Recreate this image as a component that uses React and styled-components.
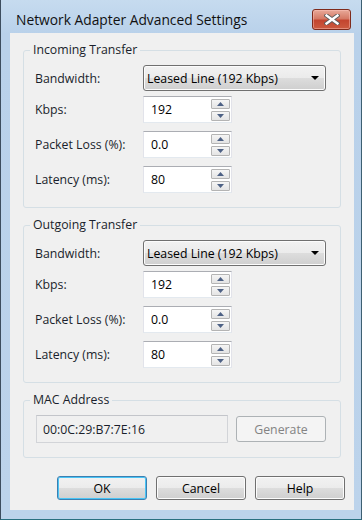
import React from 'react';
import styled, { createGlobalStyle } from 'styled-components';

const GlobalStyle = createGlobalStyle`
  html, body {
    margin: 0;
    padding: 0;
  }
  body {
    font-family: "Open Sans", "Liberation Sans", sans-serif;
    background: #bcd3ea;
  }
`;

const Frame = styled.div`
  width: 362px;
  height: 520px;
  box-sizing: border-box;
  display: flex;
  flex-direction: column;
  padding: 0 7px 9px 9px;
  border-left: 1px solid #3d4d5e;
  border-right: 1px solid #3d5f72;
  border-bottom: 1px solid #2a7080;
  background: linear-gradient(#c6dbef, #b9d1ea 34px, #bcd3eb);
`;

const TitleBar = styled.div`
  height: 33px;
  box-sizing: border-box;
  padding: 6px 3px 0 6px;
  display: flex;
  align-items: center;
  justify-content: space-between;
`;

const Title = styled.div`
  font-size: 13.8px;
  color: #111;
  white-space: nowrap;
`;

const CloseButton = styled.div`
  width: 39px;
  height: 21px;
  box-sizing: border-box;
  border: 1px solid #7f2b1c;
  border-radius: 3px;
  display: flex;
  align-items: center;
  justify-content: center;
  background: linear-gradient(#e8a999, #d57a66 45%, #c3452f 55%, #cc5b40);
  box-shadow: inset 0 0 0 1px rgba(255, 200, 190, 0.45);
`;

const Client = styled.div`
  flex: 1;
  background: #f0f0f0;
  display: flex;
  flex-direction: column;
  gap: 9px;
  padding: 9px 13px 0;
`;

const Group = styled.fieldset`
  margin: 0;
  padding: 0 0 14px;
  min-width: 0;
  border: 1px solid #d5dfe5;
  border-radius: 3px;
`;

const Legend = styled.legend`
  margin-left: 6px;
  padding: 0 3px;
  font-size: 12.3px;
  line-height: 16px;
  color: #1a1f2c;
`;

const Rows = styled.div`
  display: flex;
  flex-direction: column;
  gap: 8px;
  padding: 7px 0 0 11px;
`;

const Row = styled.div`
  display: flex;
  align-items: center;
  margin-bottom: ${p => (p.$tight ? -3 : 0)}px;
`;

const Label = styled.div`
  width: 108px;
  font-size: 12.3px;
  color: #1a1f2c;
`;

const Select = styled.div`
  width: 183px;
  height: 26px;
  box-sizing: border-box;
  border: 1px solid #707070;
  border-radius: 3px;
  padding: 0 6px 0 3px;
  display: flex;
  align-items: center;
  justify-content: space-between;
  font-size: 12.3px;
  color: #000;
  background: linear-gradient(#f2f2f2, #ebebeb 50%, #dddddd 50%, #cfcfcf);
  box-shadow: inset 0 0 0 1px #fcfcfc;
`;

const SpinBox = styled.div`
  width: 89px;
  height: 27px;
  box-sizing: border-box;
  background: #fff;
  border: 1px solid #e2e3ea;
  border-top-color: #abadb3;
  border-bottom-color: #e3e9ef;
  display: flex;
  align-items: center;
`;

const SpinValue = styled.div`
  flex: 1;
  padding-left: 7px;
  font-size: 12.3px;
  color: #000;
`;

const SpinButtons = styled.div`
  align-self: stretch;
  display: flex;
  flex-direction: column;
  gap: 2px;
  padding: 2px 1px 1px 0;
`;

const SpinButton = styled.div`
  width: 19px;
  height: 10px;
  box-sizing: border-box;
  border: 1px solid #b4b4b4;
  border-radius: 1px;
  display: flex;
  align-items: center;
  justify-content: center;
  background: linear-gradient(#f5f5f5, #e4e4e4);
`;

const MacRow = styled.div`
  display: flex;
  align-items: center;
  gap: 8px;
  padding: 7px 0 0 12px;
`;

const MacBox = styled.div`
  width: 192px;
  height: 28px;
  box-sizing: border-box;
  border: 1px solid #d2d4d8;
  border-top-color: #c3c5ca;
  padding-left: 6px;
  display: flex;
  align-items: center;
  font-size: 12.3px;
  color: #1a1f2c;
`;

const Button = styled.div`
  width: 90px;
  height: ${p => p.$h || 24}px;
  box-sizing: border-box;
  border: 1px solid ${p => (p.$disabled ? '#adb2b5' : p.$default ? '#3c7fb1' : '#707070')};
  border-radius: 3px;
  display: flex;
  align-items: center;
  justify-content: center;
  font-size: 12.3px;
  color: ${p => (p.$disabled ? '#838383' : '#000')};
  background: ${p =>
    p.$disabled
      ? '#f4f4f4'
      : 'linear-gradient(#f2f2f2, #ebebeb 50%, #dddddd 50%, #cfcfcf)'};
  box-shadow: inset 0 0 0 1px ${p => (p.$disabled ? '#f4f4f4' : p.$default ? '#49c4f5' : '#fcfcfc')};
`;

const ButtonBar = styled.div`
  display: flex;
  justify-content: flex-end;
  gap: 9px;
  margin: 9px -4px 0 0;
`;

const Arrow = ({ down, color = '#4d6185', w = 7, h = 4 }) => (
  <svg width={w} height={h} viewBox={`0 0 ${w} ${h}`}>
    <polygon
      points={down ? `0,0 ${w},0 ${w / 2},${h}` : `0,${h} ${w},${h} ${w / 2},0`}
      fill={color}
    />
  </svg>
);

const Spinner = ({ value }) => (
  <SpinBox>
    <SpinValue>{value}</SpinValue>
    <SpinButtons>
      <SpinButton><Arrow w={7} h={4} /></SpinButton>
      <SpinButton><Arrow down w={7} h={4} /></SpinButton>
    </SpinButtons>
  </SpinBox>
);

const TransferGroup = ({ title, kbps, loss, latency }) => (
  <Group>
    <Legend>{title}</Legend>
    <Rows>
      <Row $tight>
        <Label>Bandwidth:</Label>
        <Select>
          <span>Leased Line (192 Kbps)</span>
          <Arrow down color="#000" w={8} h={4} />
        </Select>
      </Row>
      <Row>
        <Label>Kbps:</Label>
        <Spinner value={kbps} />
      </Row>
      <Row>
        <Label>Packet Loss (%):</Label>
        <Spinner value={loss} />
      </Row>
      <Row>
        <Label>Latency (ms):</Label>
        <Spinner value={latency} />
      </Row>
    </Rows>
  </Group>
);

export default function App() {
  return (
    <>
      <GlobalStyle />
      <Frame>
        <TitleBar>
          <Title>Network Adapter Advanced Settings</Title>
          <CloseButton>
            <svg width="16" height="11" viewBox="0 0 16 11">
              <path d="M2.5 1.5 L13.5 9.5 M13.5 1.5 L2.5 9.5" stroke="#5b5b5b" strokeWidth="4.2" strokeLinecap="square" />
              <path d="M2.5 1.5 L13.5 9.5 M13.5 1.5 L2.5 9.5" stroke="#fff" strokeWidth="2.4" strokeLinecap="square" />
            </svg>
          </CloseButton>
        </TitleBar>
        <Client>
          <TransferGroup title="Incoming Transfer" kbps="192" loss="0.0" latency="80" />
          <TransferGroup title="Outgoing Transfer" kbps="192" loss="0.0" latency="80" />
          <Group>
            <Legend>MAC Address</Legend>
            <MacRow>
              <MacBox>00:0C:29:B7:7E:16</MacBox>
              <Button $disabled $h={26}>Generate</Button>
            </MacRow>
          </Group>
          <ButtonBar>
            <Button $default>OK</Button>
            <Button>Cancel</Button>
            <Button>Help</Button>
          </ButtonBar>
        </Client>
      </Frame>
    </>
  );
}
